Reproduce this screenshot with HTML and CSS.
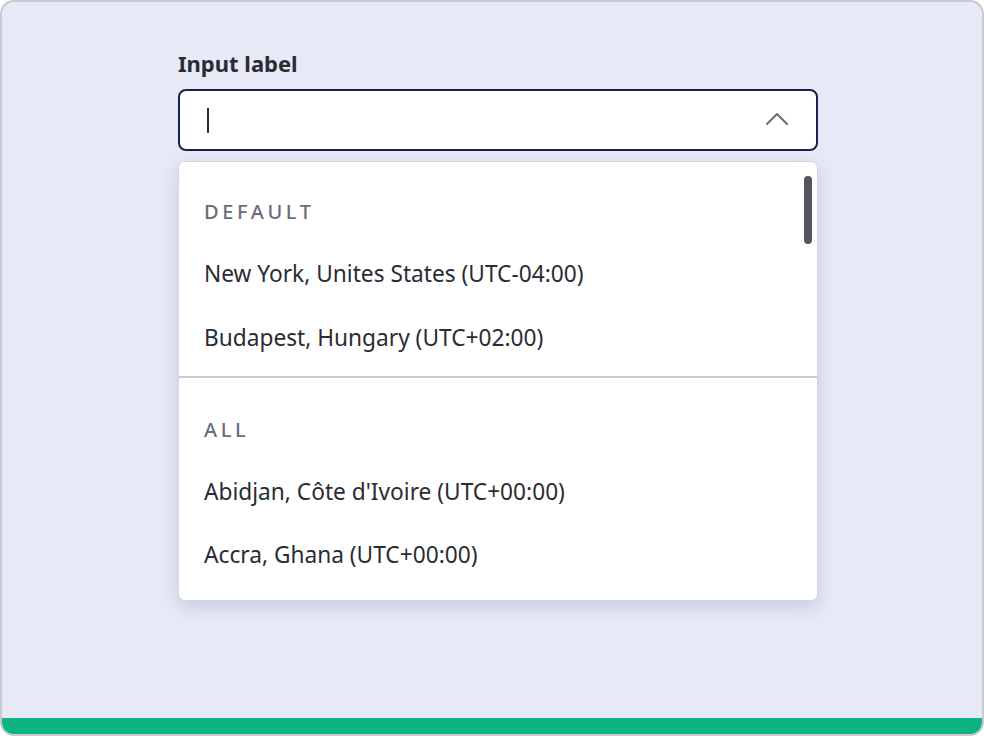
FILE: index.html
```html
<!DOCTYPE html>
<html lang="en">
<head>
  <meta charset="UTF-8" />
  <title>Timezone select</title>
  <link rel="stylesheet" href="styles.css">
</head>
<body>
  <div class="frame">
    <div class="stage">
      <div class="field">
        <label class="field-label" for="tz">Input label</label>
        <div class="select-box">
          <span class="caret"></span>
          <svg class="chevron" width="24" height="14" viewBox="0 0 24 14" aria-hidden="true">
            <path d="M2 12 L12 2 L22 12" fill="none" stroke="#6b6c78" stroke-width="2" stroke-linecap="round" stroke-linejoin="round"/>
          </svg>
        </div>

        <div class="menu">
          <div class="menu-scroll">
            <div class="group">
              <div class="group-title">DEFAULT</div>
              <div class="option">New York, Unites States (UTC-04:00)</div>
              <div class="option">Budapest, Hungary (UTC+02:00)</div>
            </div>
            <div class="group group-all">
              <div class="group-title">ALL</div>
              <div class="option">Abidjan, Côte d'Ivoire (UTC+00:00)</div>
              <div class="option">Accra, Ghana (UTC+00:00)</div>
            </div>
          </div>
          <span class="scroll-thumb"></span>
        </div>
      </div>
    </div>
    <div class="footer-bar"></div>
  </div>
</body>
</html>
```

FILE: styles.css
```css
:root {
  --frame-bg: #e7e9f6;
  --frame-border: #c9cad3;
  --navy: #17224f;
  --text-dark: #2b2c33;
  --text-muted: #6b6c78;
  --divider: #c9cbd6;
  --green: #0db47f;
}
* {
  box-sizing: border-box;
}
body {
  margin: 0;
  font-family: 'Noto Sans', sans-serif;
  color: var(--text-dark);
}
.frame {
  width: 984px;
  height: 736px;
  display: flex;
  flex-direction: column;
  background: var(--frame-bg);
  border: 2px solid var(--frame-border);
  border-radius: 14px;
  overflow: hidden;
}
.stage {
  flex: 1;
  padding: 47px 0 0 176px;
}
.field {
  width: 640px;
}
.field-label {
  display: block;
  font-size: 22px;
  font-weight: 700;
  line-height: 28px;
  margin-bottom: 12px;
}
.select-box {
  position: relative;
  height: 62px;
  display: flex;
  align-items: center;
  justify-content: space-between;
  padding: 0 27px 0 27px;
  background: #fff;
  border: 2px solid var(--navy);
  border-radius: 8px;
}
.caret {
  width: 1.5px;
  height: 25px;
  background: var(--text-dark);
}
.chevron {
  margin-top: -2px;
}
.menu {
  position: relative;
  margin-top: 10px;
  height: 440px;
  background: #fff;
  border: 1px solid #d2d4e0;
  border-radius: 7px;
  box-shadow: 0 6px 18px rgba(60, 70, 140, 0.18);
  overflow: hidden;
}
.menu-scroll {
  padding-top: 22px;
}
.group {
  padding: 0 24px 8px 25px;
}
.group-all {
  border-top: 2px solid var(--divider);
  padding-top: 24px;
}
.group-title {
  height: 56px;
  line-height: 56px;
  font-size: 20px;
  font-weight: 500;
  letter-spacing: 3.6px;
  color: var(--text-muted);
}
.option {
  height: 64px;
  padding-top: 4px;
  line-height: 60px;
  font-size: 22.7px;
}
.group-all .option {
  height: 63px;
  padding-top: 5px;
  line-height: 58px;
}
.scroll-thumb {
  position: absolute;
  top: 14px;
  right: 5px;
  width: 8px;
  height: 68px;
  border-radius: 4px;
  background: #55565e;
}
.footer-bar {
  height: 16px;
  background: var(--green);
}
```
